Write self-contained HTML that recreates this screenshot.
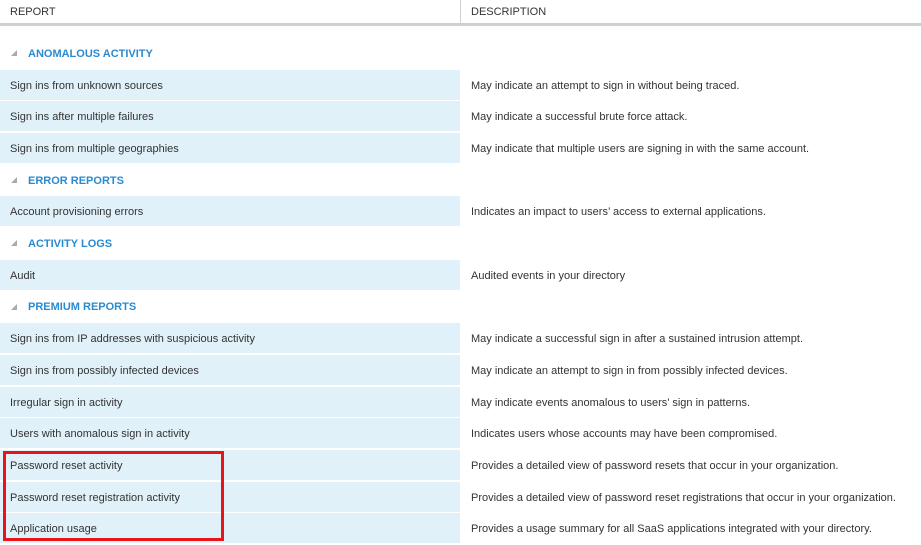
<!DOCTYPE html>
<html><head><meta charset="utf-8"><style>
body{margin:0;width:921px;height:544px;background:#fff;position:relative;overflow:hidden;font-family:"Liberation Sans",sans-serif;color:#333}
.h{position:absolute;top:6px;font-size:11px;color:#333}
.hb{position:absolute;left:0;top:23px;width:921px;height:3px;background:#d0d0d0}
.vs{position:absolute;left:460px;top:0;width:1px;height:24px;background:#d0d0d0}
.r{position:absolute;left:0;width:460px;height:30px;background:#e0f1fa}
.l{position:absolute;left:10px;font-size:11px;line-height:32px;color:#333;white-space:nowrap}
.d{position:absolute;left:471px;font-size:11px;line-height:32px;color:#333;white-space:nowrap}
.s{position:absolute;left:28px;font-size:11px;line-height:32px;color:#2a8ad0;font-weight:bold;white-space:nowrap}
.t{position:absolute;left:11px;width:0;height:0;border-left:6px solid transparent;border-bottom:6px solid #aaa}
.box{position:absolute;left:3px;top:451px;width:215px;height:84px;border:3px solid #e8141c}
</style></head><body>
<div class="h" style="left:10px">REPORT</div>
<div class="h" style="left:471px">DESCRIPTION</div>
<div class="vs"></div><div class="hb"></div>

<div class="t" style="top:50px"></div><div class="s" style="top:38px">ANOMALOUS ACTIVITY</div>
<div class="r" style="top:69.5px"></div><div class="l" style="top:69.5px">Sign ins from unknown sources</div><div class="d" style="top:69.5px">May indicate an attempt to sign in without being traced.</div>
<div class="r" style="top:101.2px"></div><div class="l" style="top:101.2px">Sign ins after multiple failures</div><div class="d" style="top:101.2px">May indicate a successful brute force attack.</div>
<div class="r" style="top:132.9px"></div><div class="l" style="top:132.9px">Sign ins from multiple geographies</div><div class="d" style="top:132.9px">May indicate that multiple users are signing in with the same account.</div>
<div class="t" style="top:177px"></div><div class="s" style="top:164.6px">ERROR REPORTS</div>
<div class="r" style="top:196.3px"></div><div class="l" style="top:196.3px">Account provisioning errors</div><div class="d" style="top:196.3px">Indicates an impact to users’ access to external applications.</div>
<div class="t" style="top:240px"></div><div class="s" style="top:228px">ACTIVITY LOGS</div>
<div class="r" style="top:259.7px"></div><div class="l" style="top:259.7px">Audit</div><div class="d" style="top:259.7px">Audited events in your directory</div>
<div class="t" style="top:304px"></div><div class="s" style="top:291.4px">PREMIUM REPORTS</div>
<div class="r" style="top:323.1px"></div><div class="l" style="top:323.1px">Sign ins from IP addresses with suspicious activity</div><div class="d" style="top:323.1px">May indicate a successful sign in after a sustained intrusion attempt.</div>
<div class="r" style="top:354.8px"></div><div class="l" style="top:354.8px">Sign ins from possibly infected devices</div><div class="d" style="top:354.8px">May indicate an attempt to sign in from possibly infected devices.</div>
<div class="r" style="top:386.5px"></div><div class="l" style="top:386.5px">Irregular sign in activity</div><div class="d" style="top:386.5px">May indicate events anomalous to users’ sign in patterns.</div>
<div class="r" style="top:418.2px"></div><div class="l" style="top:418.2px">Users with anomalous sign in activity</div><div class="d" style="top:418.2px">Indicates users whose accounts may have been compromised.</div>
<div class="r" style="top:449.9px"></div><div class="l" style="top:449.9px">Password reset activity</div><div class="d" style="top:449.9px">Provides a detailed view of password resets that occur in your organization.</div>
<div class="r" style="top:481.6px"></div><div class="l" style="top:481.6px">Password reset registration activity</div><div class="d" style="top:481.6px">Provides a detailed view of password reset registrations that occur in your organization.</div>
<div class="r" style="top:513.3px"></div><div class="l" style="top:513.3px">Application usage</div><div class="d" style="top:513.3px">Provides a usage summary for all SaaS applications integrated with your directory.</div>
<div class="box"></div>
</body></html>
